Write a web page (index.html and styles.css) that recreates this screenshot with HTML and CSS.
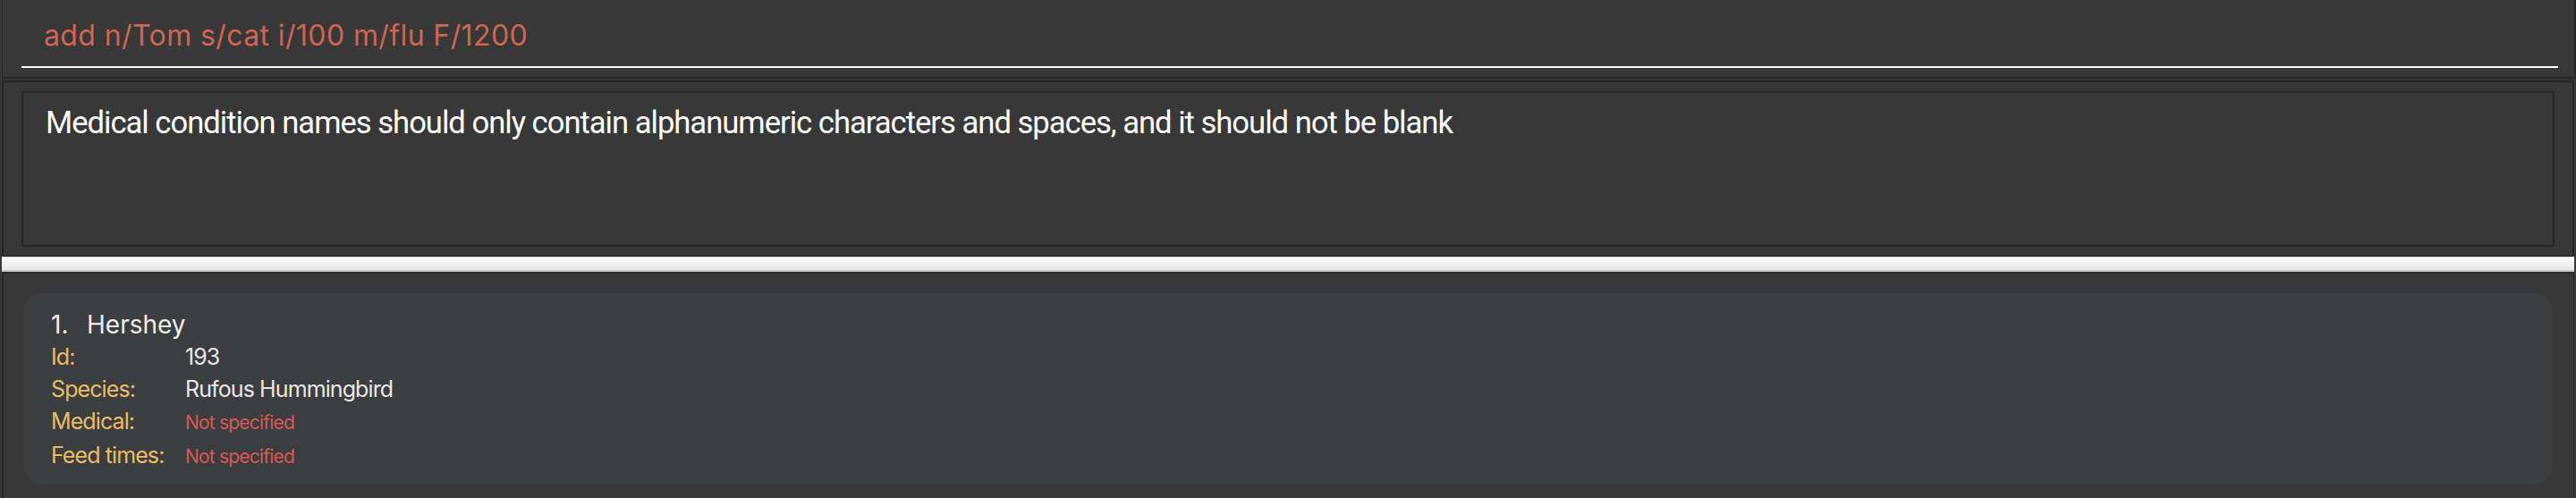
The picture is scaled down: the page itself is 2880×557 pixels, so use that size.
FILE: index.html
```html
<!DOCTYPE html>
<html lang="en">
<head>
<meta charset="utf-8">
<title>Command</title>
<link rel="stylesheet" href="styles.css">
</head>
<body>
<div class="app">
  <div class="command-pane">
    <div class="command-field">add n/Tom s/cat i/100 m/flu F/1200</div>
  </div>
  <div class="result-pane">
    <div class="result-box">Medical condition names should only contain alphanumeric characters and spaces, and it should not be blank</div>
  </div>
  <div class="divider"></div>
  <div class="list-pane">
    <div class="card">
      <div class="card-name"><span class="card-index">1.</span><span>Hershey</span></div>
      <div class="card-row"><span class="card-label">Id:</span><span class="card-value">193</span></div>
      <div class="card-row"><span class="card-label">Species:</span><span class="card-value">Rufous Hummingbird</span></div>
      <div class="card-row"><span class="card-label">Medical:</span><span class="card-missing">Not specified</span></div>
      <div class="card-row"><span class="card-label">Feed times:</span><span class="card-missing">Not specified</span></div>
    </div>
  </div>
</div>
</body>
</html>
```
FILE: styles.css
```css
html, body {
  margin: 0;
  padding: 0;
  background: #383838;
}
body {
  width: 2880px;
  height: 557px;
  overflow: hidden;
  font-family: Inter, "Noto Sans", sans-serif;
}
.app {
  display: flex;
  flex-direction: column;
  height: 557px;
}
.command-pane {
  margin-left: 2px;
  height: 86px;
  border-left: 1px solid #262626;
  border-right: 2px solid #262626;
  border-bottom: 2px solid #262626;
  padding: 0 18px 0 21px;
}
.command-field {
  height: 38px;
  padding: 21px 0 15px 25px;
  line-height: 38px;
  font-size: 32px;
  color: #d06651;
  border-bottom: 2px solid #ffffff;
  letter-spacing: 0.4px;
  white-space: nowrap;
}
.result-pane {
  margin: 2px 2px 0 2px;
  border: 2px solid #262626;
  border-bottom: none;
  padding: 10px 20px 10px 20px;
}
.result-box {
  height: 158px;
  border: 2px solid #262626;
  padding: 12px 25px 0 25px;
  font-family: Roboto, Inter, sans-serif;
  font-size: 34.6px;
  line-height: 42px;
  color: #ffffff;
  letter-spacing: -1px;
  white-space: nowrap;
}
.divider {
  margin: 0 2px;
  height: 20px;
  background: linear-gradient(to bottom,
    #262626 0px, #262626 1px,
    #d2d2d2 1px, #d2d2d2 2px,
    #fbfbfb 2px, #e6e6e6 16px,
    #c8c8c8 16px, #c8c8c8 18px,
    #2b2b2b 18px, #2b2b2b 20px);
}
.list-pane {
  flex: 1;
  margin: 0 2px 0 2px;
  border-left: 2px solid #262626;
  border-right: 1px solid #262626;
  padding: 22px 23px 0 22px;
}
.card {
  background: #3c3d3f;
  border-radius: 20px;
  padding: 17px 31px 12px 31px;
  color: #e8e8e8;
}
.card-name {
  display: flex;
  align-items: baseline;
  font-size: 28px;
  line-height: 36px;
  color: #eeeeee;
}
.card-index {
  width: 40px;
}
.card-row {
  display: flex;
  align-items: baseline;
  line-height: 36px;
  font-size: 25px;
}
.card-label {
  width: 150px;
  color: #e9bd66;
  letter-spacing: -0.9px;
}
.card-value {
  color: #e8e8e8;
  letter-spacing: -0.9px;
}
.card-missing {
  font-size: 21px;
  color: #d65a5a;
  letter-spacing: -0.8px;
}
```
